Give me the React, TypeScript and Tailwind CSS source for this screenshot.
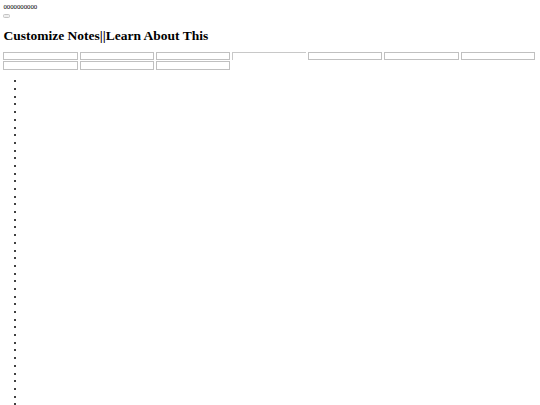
// Unstyled notes page, rendered at reduced scale
const fieldCount = 10;
const itemCount = 60;

export default function App() {
  return (
    <div
      className="min-h-screen bg-white p-[3.4px] text-[6.75px] leading-[7.7px] text-black"
      style={{ fontFamily: '"Liberation Serif", "Times New Roman", serif' }}
    >
      <div>0000000000</div>
      <div className="pt-[3px]">
        <button className="block h-[3.5px] w-[7px] rounded-[1.5px] border border-[#c4c4c4] bg-[#efefef]" />
      </div>

      <h1 className="mt-[10px] mb-[9px] text-[13.5px] font-bold leading-[15.5px]">
        Customize Notes||Learn About This
      </h1>

      <div className="flex flex-wrap gap-x-[2px] gap-y-[1px]">
        {Array.from({ length: fieldCount }).map((_, i) =>
          i === 3 ? (
            <div
              key={i}
              className="h-[7.5px] w-[74.2px] border-t border-l border-[#c8c8c8] border-b-[#e8e8e8] border-r-[#e8e8e8] bg-white"
            />
          ) : (
            <div key={i} className="h-[8.4px] w-[74.2px] border border-[#c0c0c0] bg-white" />
          )
        )}
      </div>

      <ul className="mt-[7.5px] list-disc pl-[22px]">
        {Array.from({ length: itemCount }).map((_, i) => (
          <li key={i} className="h-[7.7px]" />
        ))}
      </ul>
    </div>
  );
}
